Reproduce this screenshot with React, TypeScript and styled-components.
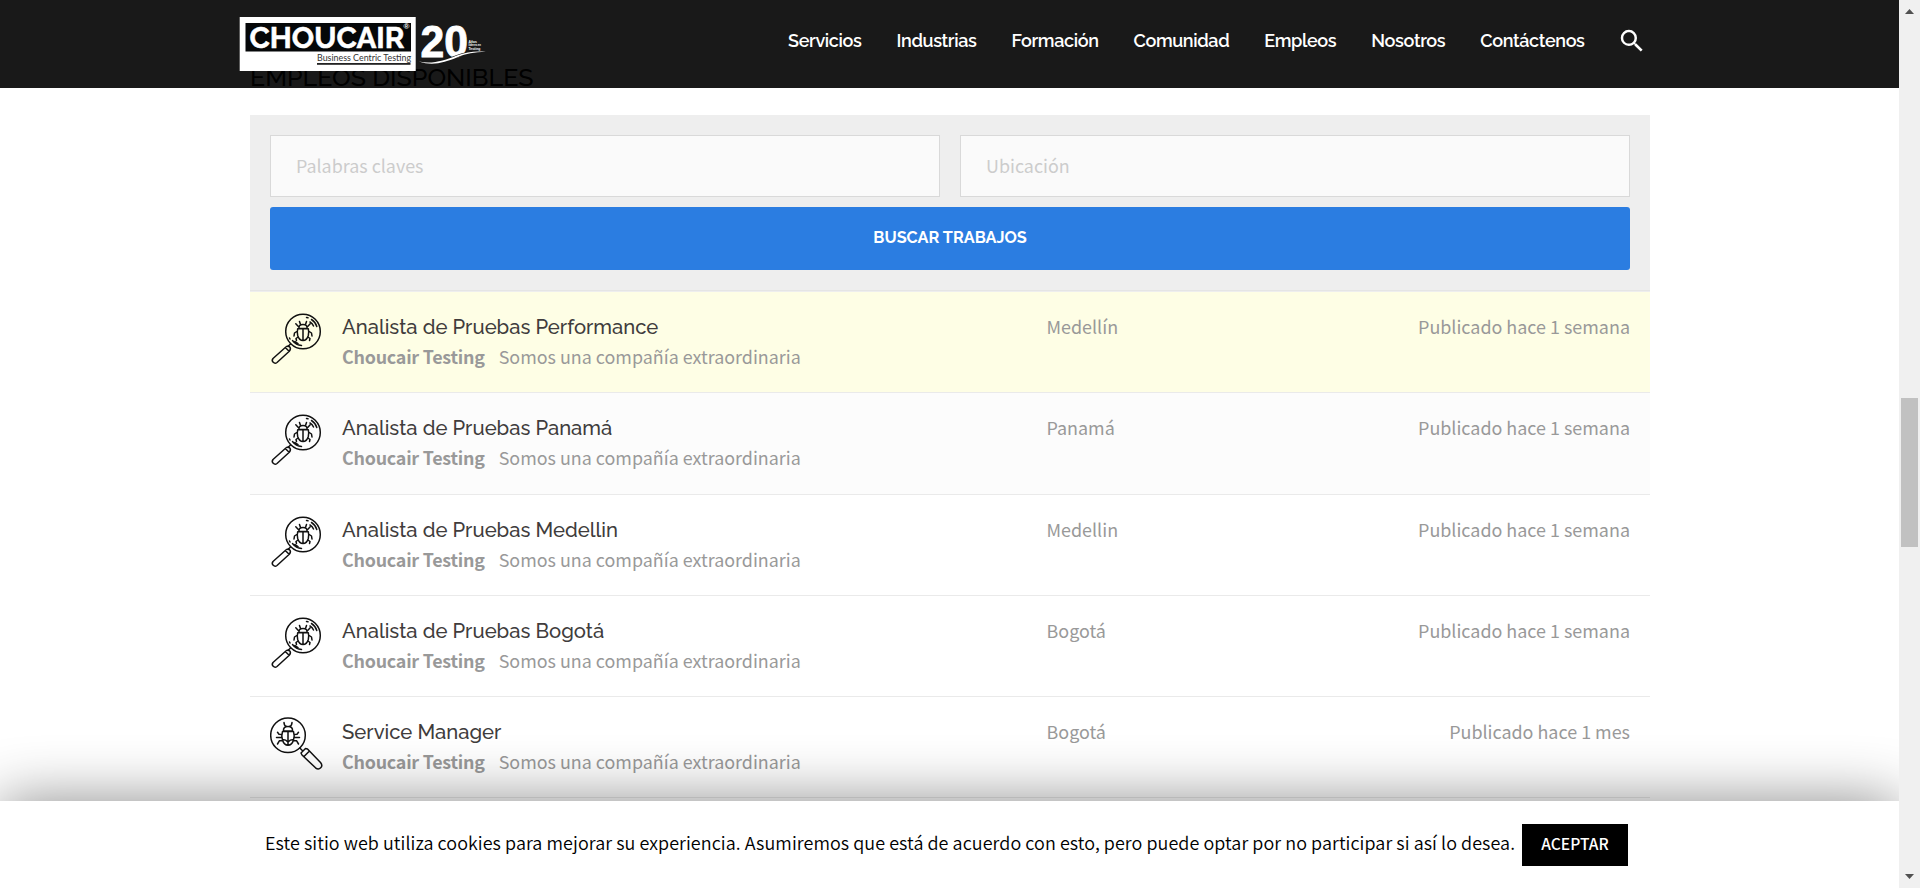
import React from 'react';
import styled, { createGlobalStyle } from 'styled-components';
import { MdSearch } from 'react-icons/md';

const heading = `Raleway, Lato, sans-serif`;
const body = `"Noto Sans CJK SC", "Noto Sans", sans-serif`;

const GlobalStyle = createGlobalStyle`
  *, *::before, *::after { box-sizing: border-box; }
  body { margin: 0; background: #fff; overflow: hidden; font-family: ${body}; }
`;

const Screen = styled.div`
  display: flex;
  height: 888px;
  overflow: hidden;
`;

const Page = styled.div`
  position: relative;
  flex: 1;
  height: 888px;
  overflow: hidden;
`;

const Header = styled.header`
  position: absolute;
  z-index: 2;
  inset: 0 0 auto 0;
  height: 88px;
  padding: 0 252px 0 236px;
  display: flex;
  align-items: flex-start;
  justify-content: space-between;
  background: rgba(0, 0, 0, 0.9);
`;

const Logo = styled.svg`
  display: block;
  width: 256px;
  height: 80px;
`;

const Nav = styled.nav`
  display: flex;
  align-items: center;
  gap: 35px;
  height: 81px;
`;

const NavLink = styled.a`
  font: 600 18px/24px ${heading};
  letter-spacing: -0.36px;
  color: #fff;
  white-space: nowrap;
`;

const SearchButton = styled.button`
  display: flex;
  margin: 0 0 0 -2.6px;
  padding: 0;
  border: 0;
  background: none;
  color: #fff;
  font-size: 30px;
`;

const Main = styled.main`
  width: 1400px;
  margin: 0 auto 0 250px;
  padding-top: 62px;
`;

const SectionTitle = styled.h2`
  margin: 0 0 23px;
  font: 500 25px/30px ${heading};
  color: #000;
`;

const SearchForm = styled.form`
  display: grid;
  grid-template-columns: 1fr 1fr;
  gap: 10px 20px;
  height: 175px;
  padding: 20px;
  background: #eee;
`;

const Field = styled.input`
  height: 62px;
  width: 100%;
  padding: 0 25px 2px;
  border: 1px solid #d9d9d9;
  border-radius: 0;
  background: #fafafa;
  font: 400 17.9px/26px ${body};
  &::placeholder { color: #ccc; opacity: 1; }
`;

const Submit = styled.button`
  grid-column: 1 / -1;
  height: 63px;
  padding: 0 0 1px;
  border: 0;
  border-radius: 3px;
  background: #2b7de1;
  color: #fff;
  font: 700 16.3px/24px ${heading};
  text-transform: uppercase;
`;

const JobList = styled.ul`
  margin: 0;
  padding: 1px 0 0;
  border-top: 1px solid #e5e5e5;
  background: linear-gradient(#eee 1px, transparent 1px);
  list-style: none;
`;

const JobRow = styled.li<{ $bg: string }>`
  display: grid;
  grid-template-columns: 72px 704.5px 1fr auto;
  height: 101.25px;
  padding: 20px 20px 0;
  border-bottom: 1px solid #eaeaea;
  background: ${(p) => p.$bg};
`;

const JobIcon = styled.svg`
  display: block;
  width: 54px;
  height: 54px;
  fill: none;
  stroke: #111;
  stroke-width: 1.5;
  stroke-linecap: round;
  stroke-linejoin: round;
`;

const JobTitle = styled.h3`
  margin: 0;
  font: 500 20.25px/30px ${heading};
  color: #403c3c;
`;

const JobMeta = styled.div`
  display: flex;
  gap: 14px;
  font: 400 17.9px/28px ${body};
  color: #999;
`;

const Company = styled.strong`
  font-weight: 700;
  letter-spacing: -0.24px;
`;

const JobDetail = styled.div`
  font: 400 17.93px/28px ${body};
  color: #999;
`;

const CookieBar = styled.div`
  position: absolute;
  z-index: 3;
  inset: auto 0 0 0;
  height: 87px;
  padding: 0 271px 0 265px;
  display: flex;
  align-items: center;
  justify-content: space-between;
  background: #fff;
  box-shadow: 0 0 60px rgba(0, 0, 0, 0.46);
`;

const CookieText = styled.p`
  margin: 0;
  padding-bottom: 5px;
  font: 350 17.95px/30px ${body};
  letter-spacing: 0.068px;
  color: #000;
  white-space: nowrap;
`;

const AcceptButton = styled.button`
  width: 106px;
  height: 42px;
  padding: 0 0 3px;
  border: 0;
  background: #000;
  color: #fff;
  font: 500 15.6px/24px ${body};
`;

const Scrollbar = styled.div`
  display: flex;
  flex-direction: column;
  align-items: center;
  width: 21px;
  height: 888px;
  padding: 9px 0;
  background: #f0f0f0;
`;

const Thumb = styled.div`
  width: 17px;
  height: 149px;
  margin: 384px 0 auto;
  background: #c1c1c1;
`;

const Arrow = styled.div<{ $down?: boolean }>`
  width: 9px;
  height: 5px;
  background: #505050;
  clip-path: ${(p) => (p.$down ? 'polygon(0 0, 100% 0, 50% 100%)' : 'polygon(50% 0, 100% 100%, 0 100%)')};
`;

function BrandLogo() {
  return (
    <Logo viewBox="236 0 256 80" aria-label="Choucair 20">
      <rect x="239.700" y="17" width="176" height="54" fill="#fff" />
      <rect x="245.5" y="23" width="165.5" height="28.5" fill="#050708" />
      <text x="249.5" y="47.500" textLength="155" lengthAdjust="spacingAndGlyphs" fill="#fff" stroke="#fff" strokeWidth="0.5" fontFamily={heading} fontWeight="700" fontSize="29.4">CHOUCAIR</text>
      <text x="403.6" y="28.8" fill="#fff" fontFamily="Liberation Sans, sans-serif" fontSize="8" fontWeight="700">®</text>
      <text x="317" y="60.8" textLength="94" lengthAdjust="spacingAndGlyphs" fill="#333" fontFamily="Lato, sans-serif" fontSize="9">Business Centric Testing</text>
      <rect x="317" y="63" width="93.5" height="1.8" fill="#222" />
      <text x="420.500" y="56.500" textLength="47.500" lengthAdjust="spacingAndGlyphs" fill="#fff" stroke="#fff" strokeWidth="0.9" fontFamily="Liberation Sans, sans-serif" fontWeight="700" fontSize="43.500">20</text>
      <path d="M419 61.5C432 64.5 444 60.5 457 55.5C467 51.5 476 51 486 51.8C474 52.500 466 53.500 458 57C444 63 432 66 419 61.5Z" fill="#fff" stroke="#191919" strokeWidth="1.2" paintOrder="stroke" />
      <g fill="#fff" fontFamily="Liberation Sans, sans-serif" fontWeight="700">
        <text x="468.500" y="42.500" fontSize="3.400">Años</text>
        <text x="468.500" y="46.200" fontSize="3.400" textLength="12.500" lengthAdjust="spacingAndGlyphs">líderes en</text>
        <text x="468.500" y="49.800" fontSize="3.400">Testing</text>
      </g>
    </Logo>
  );
}

/* Magnifier with the handle at the lower left */
function LensLeft() {
  return (
    <JobIcon viewBox="0 0 54 54">
      <circle cx="33" cy="19.500" r="17.300" />
      <path d="M36.500 5.500l1.500.3M41.500 7.500q4 2.500 5.300 7M40 10q2.500 1.500 3.500 4M19.500 26l.5 1M22.500 28.500q3.500 4.500 9 5M25 29.500l3 2" />
      <path d="M20.500 32L18 34.500M15.300 35.500q2.500-2.500 4.300-.7t-.3 4.500L7 50.500q-2 1.500-3.800-.2t-.2-3.800ZM15.300 35.500l3.800 3.800" />
      <path d="M29 16.500q-.5-4 4-4t4 4ZM27.700 16.700h10.600q.8 3.500 0 6.800-1.500 5-5.300 5t-5.300-5q-.8-3.300 0-6.800ZM33 17v11M30.500 12.500l-1-3M35.500 12.500l1-3M28.800 15l-3-3.200M37.200 15l3-3.200M27.500 19l-3 2-.5 3M38.500 19l3 2 .5 3M28 25l-2 1.500.5 2M38 25l2 1.500-.5 2" />
    </JobIcon>
  );
}

/* Magnifier with the handle at the lower right */
function LensRight() {
  return (
    <JobIcon viewBox="0 0 54 54">
      <circle cx="18" cy="18.300" r="17.300" />
      <path d="M29.800 31l3 3M31 36l4.500-4.500 2 .5L50.500 45.500q2.500 3 .2 5.300t-5.200 0L32 38ZM34 39.500l5-5" />
      <path d="M13.500 14q-.5-4.500 4.500-4.500t4.500 4.500ZM12.500 14.500h11q1.300 4 0 8.500-1.500 5.200-5.500 5.200T12.500 23q-1.300-4.500 0-8.500ZM18 15v13M16.500 9.500q-2.500-1-2.500-4M19.500 9.500q2.500-1 2.500-4M12 17.500l-3-.2-1.500-2M24 17.500l3-.2 1.500-2M12 20.500H6.500M24 20.500h5.500M12.500 23.500l-3 .2-2 3.300M23.500 23.500l3 .2 2 3.300M12.500 22.500q3.500 0 5.500 2.500 2-2.500 5.500-2.500" />
    </JobIcon>
  );
}

const links = ['Servicios', 'Industrias', 'Formación', 'Comunidad', 'Empleos', 'Nosotros', 'Contáctenos'];

const jobs = [
  { title: 'Analista de Pruebas Performance', place: 'Medellín', date: '1 semana', bg: '#fefee5' },
  { title: 'Analista de Pruebas Panamá', place: 'Panamá', date: '1 semana', bg: '#fcfcfc' },
  { title: 'Analista de Pruebas Medellin', place: 'Medellin', date: '1 semana', bg: '#fff' },
  { title: 'Analista de Pruebas Bogotá', place: 'Bogotá', date: '1 semana', bg: '#fff' },
  { title: 'Service Manager', place: 'Bogotá', date: '1 mes', bg: '#fff', right: true },
];

export default function App() {
  return (
    <Screen>
      <GlobalStyle />
      <Page>
        <Header>
          <BrandLogo />
          <Nav>
            {links.map((l) => <NavLink key={l}>{l}</NavLink>)}
            <SearchButton aria-label="Buscar"><MdSearch /></SearchButton>
          </Nav>
        </Header>
        <Main>
          <SectionTitle>EMPLEOS DISPONIBLES</SectionTitle>
          <SearchForm>
            <Field placeholder="Palabras claves" />
            <Field placeholder="Ubicación" />
            <Submit type="button">Buscar trabajos</Submit>
          </SearchForm>
          <JobList>
            {jobs.map((j) => (
              <JobRow key={j.title} $bg={j.bg}>
                {j.right ? <LensRight /> : <LensLeft />}
                <div>
                  <JobTitle>{j.title}</JobTitle>
                  <JobMeta>
                    <Company>Choucair Testing</Company>
                    <span>Somos una compañía extraordinaria</span>
                  </JobMeta>
                </div>
                <JobDetail>{j.place}</JobDetail>
                <JobDetail>Publicado hace {j.date}</JobDetail>
              </JobRow>
            ))}
          </JobList>
        </Main>
        <CookieBar>
          <CookieText>
            Este sitio web utiliza cookies para mejorar su experiencia. Asumiremos que está de acuerdo con esto, pero puede optar por no participar si así lo desea.
          </CookieText>
          <AcceptButton>ACEPTAR</AcceptButton>
        </CookieBar>
      </Page>
      <Scrollbar>
        <Arrow />
        <Thumb />
        <Arrow $down />
      </Scrollbar>
    </Screen>
  );
}
